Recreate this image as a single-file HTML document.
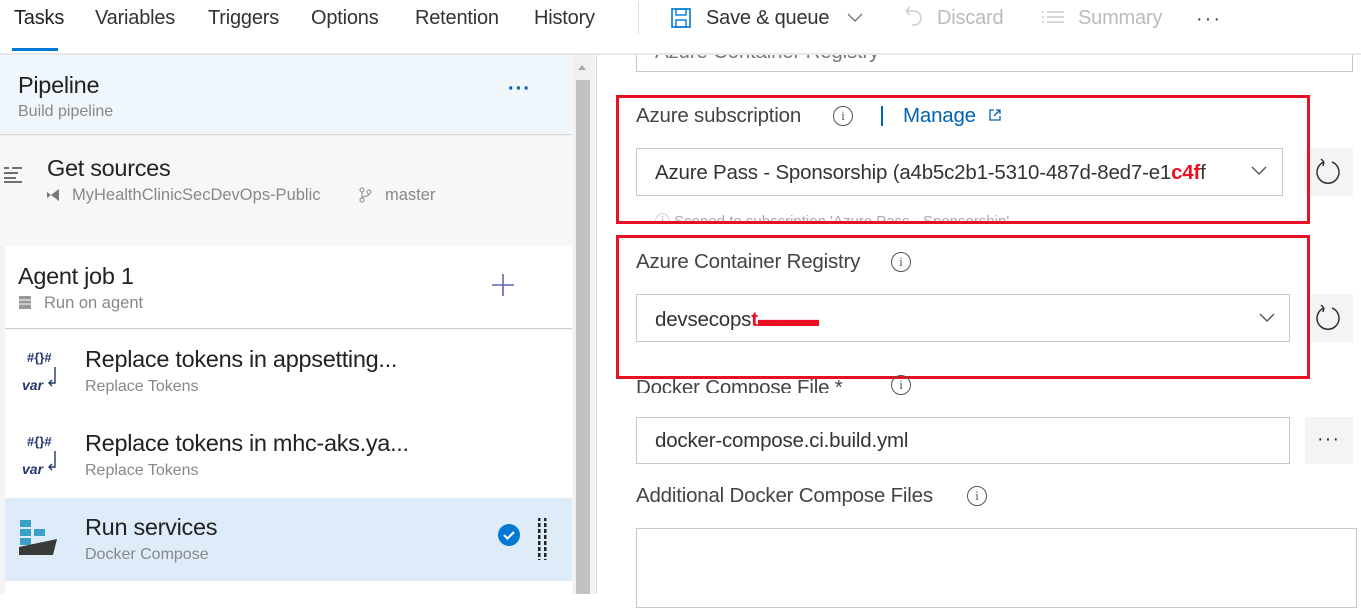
<!DOCTYPE html>
<html><head><meta charset="utf-8"><style>
*{box-sizing:border-box;margin:0;padding:0}
body{width:1361px;height:594px;overflow:hidden;background:#fff;font-family:"Liberation Sans",sans-serif;color:#222;position:relative}
.a{position:absolute;white-space:nowrap}
.tab{font-size:20px;color:#333;top:7px;letter-spacing:-0.2px}
.t20{font-size:23.5px;color:#222;letter-spacing:-0.3px}
.sub{font-size:16px;color:#888}
.lbl{font-size:20.5px;color:#444;letter-spacing:-0.2px}
.box{position:absolute;border:1px solid #c8c8c8;background:#fff}
.red{position:absolute;border:3px solid #e81123}
.info{position:absolute;width:20px;height:20px;border:1.5px solid #555;border-radius:50%;font-size:13px;text-align:center;line-height:17px;color:#555;font-family:"Liberation Serif",serif}
.btn{position:absolute;background:#f4f4f4}
</style></head><body>
<!-- right top clipped box -->
<div class="box" style="left:636px;top:40px;width:717px;height:32px"></div>
<div class="a lbl" style="left:655px;top:40px;color:#777">Azure Container Registry</div>
<!-- header -->
<div class="a" style="left:0;top:0;width:1361px;height:53px;background:#fff"></div>
<div class="a tab" style="left:14px;color:#222">Tasks</div>
<div class="a" style="left:12px;top:48px;width:46px;height:3px;background:#0078d4"></div>
<div class="a tab" style="left:95px">Variables</div>
<div class="a tab" style="left:208px">Triggers</div>
<div class="a tab" style="left:311px">Options</div>
<div class="a tab" style="left:415px">Retention</div>
<div class="a tab" style="left:534px">History</div>
<div class="a" style="left:638px;top:2px;width:1px;height:32px;background:#ddd"></div>
<svg class="a" style="left:670px;top:7px" width="22" height="22" viewBox="0 0 22 22"><rect x="2" y="2" width="18" height="18" fill="none" stroke="#0078d4" stroke-width="1.6"/><rect x="6" y="2" width="10" height="6" fill="none" stroke="#0078d4" stroke-width="1.4"/><rect x="6" y="13" width="10" height="7" fill="none" stroke="#0078d4" stroke-width="1.4"/></svg>
<div class="a tab" style="left:706px;top:7px;color:#333">Save &amp; queue</div>
<svg class="a" style="left:846px;top:12px" width="18" height="12"><path d="M2 2l7 7 7-7" fill="none" stroke="#777" stroke-width="1.4"/></svg>
<svg class="a" style="left:902px;top:5px" width="22" height="26"><path d="M4 6 h8 a7 7 0 0 1 0 14 h-2 M4 6 l4 -4 M4 6 l4 4" fill="none" stroke="#ccc" stroke-width="1.5"/></svg>
<div class="a tab" style="left:937px;top:7px;color:#bbb">Discard</div>
<svg class="a" style="left:1041px;top:10px" width="24" height="16"><path d="M1 2h2M6 2h17M1 7h2M6 7h17M1 12h2M6 12h17" stroke="#ccc" stroke-width="1.4"/></svg>
<div class="a tab" style="left:1078px;top:7px;color:#bbb">Summary</div>
<div class="a" style="left:1196px;top:8px;font-size:20px;color:#444;letter-spacing:2px">···</div>
<div class="a" style="left:0;top:53px;width:1361px;height:2px;background:#eae7ea"></div>

<!-- left panel -->
<div class="a" style="left:0;top:55px;width:596px;height:539px;background:#f4f4f4"></div>
<div class="a" style="left:0;top:55px;width:572px;height:80px;background:#eff6fc;border-bottom:1px solid #d8d8d8"></div>
<div class="a t20" style="left:18px;top:72px">Pipeline</div>
<div class="a sub" style="left:18px;top:103px">Build pipeline</div>
<div class="a" style="left:508px;top:78px;font-size:20px;color:#0058a8;font-weight:bold;letter-spacing:1px">···</div>
<div class="a" style="left:0;top:136px;width:572px;height:110px;background:#f7f7f7"></div>
<svg class="a" style="left:2px;top:164px" width="22" height="20"><path d="M2 4h5M10 4h10M2 9h14M2 14h12M2 18h18" stroke="#444" stroke-width="1.5"/></svg>
<div class="a t20" style="left:47px;top:155px">Get sources</div>
<svg class="a" style="left:46px;top:188px" width="16" height="14"><path d="M1 4l4 3-4 3zM5 7l8-6v12z" fill="#777"/></svg>
<div class="a sub" style="left:72px;top:186px;font-size:16.5px">MyHealthClinicSecDevOps-Public</div>
<svg class="a" style="left:358px;top:187px" width="14" height="16"><circle cx="4" cy="3" r="2" fill="none" stroke="#888"/><circle cx="4" cy="13" r="2" fill="none" stroke="#888"/><circle cx="11" cy="5" r="2" fill="none" stroke="#888"/><path d="M4 5v6M11 7c0 3-7 2-7 4" fill="none" stroke="#888"/></svg>
<div class="a sub" style="left:385px;top:186px;font-size:16.5px">master</div>

<div class="a" style="left:5px;top:246px;width:567px;height:83px;background:#fff;border-bottom:1px solid #d0d0d0"></div>
<div class="a t20" style="left:18px;top:263px">Agent job 1</div>
<svg class="a" style="left:18px;top:295px" width="14" height="15"><rect x="1" y="1" width="12" height="13" fill="#999"/><path d="M1 5h12M1 9h12" stroke="#fff"/></svg>
<div class="a sub" style="left:44px;top:294px;font-size:16.5px">Run on agent</div>
<svg class="a" style="left:490px;top:272px" width="26" height="26"><path d="M13 2v22M2 13h22" stroke="#5b66b5" stroke-width="1.6"/></svg>

<div class="a" style="left:5px;top:330px;width:567px;height:168px;background:#fff"></div>
<div class="a" style="left:27px;top:350px;font-size:13px;color:#24386e;font-weight:bold">#{}#</div>
<div class="a" style="left:22px;top:377px;font-size:14px;color:#24386e;font-style:italic;font-weight:bold">var</div>
<svg class="a" style="left:48px;top:366px" width="10" height="22"><path d="M7 1v16H2M4 14l-3 3 3 3" fill="none" stroke="#24386e" stroke-width="1.4"/></svg>
<div class="a t20" style="left:85px;top:346px">Replace tokens in appsetting...</div>
<div class="a sub" style="left:85px;top:378px">Replace Tokens</div>
<div class="a" style="left:27px;top:434px;font-size:13px;color:#24386e;font-weight:bold">#{}#</div>
<div class="a" style="left:22px;top:461px;font-size:14px;color:#24386e;font-style:italic;font-weight:bold">var</div>
<svg class="a" style="left:48px;top:450px" width="10" height="22"><path d="M7 1v16H2M4 14l-3 3 3 3" fill="none" stroke="#24386e" stroke-width="1.4"/></svg>
<div class="a t20" style="left:85px;top:430px">Replace tokens in mhc-aks.ya...</div>
<div class="a sub" style="left:85px;top:462px">Replace Tokens</div>

<div class="a" style="left:5px;top:498px;width:567px;height:83px;background:#deecf9"></div>
<svg class="a" style="left:17px;top:517px" width="42" height="48"><rect x="3" y="3" width="11" height="7" fill="#3aa0c8"/><rect x="3" y="12" width="11" height="7" fill="#3aa0c8"/><rect x="17" y="12" width="11" height="7" fill="#3aa0c8"/><rect x="3" y="21" width="11" height="7" fill="#3aa0c8"/><path d="M2 30 L40 22 L36 38 L2 38z" fill="#3a3a3a"/></svg>
<div class="a t20" style="left:85px;top:514px">Run services</div>
<div class="a sub" style="left:85px;top:546px">Docker Compose</div>
<svg class="a" style="left:497px;top:523px" width="24" height="24"><circle cx="12" cy="12" r="11" fill="#0078d4"/><path d="M7 12l3.5 3.5L17 9" fill="none" stroke="#fff" stroke-width="2.2"/></svg>
<svg class="a" style="left:537px;top:517px" width="12" height="44"><g fill="#222"><rect x="1" y="1" width="2.5" height="42"/><rect x="7" y="1" width="2.5" height="42"/></g><g fill="#deecf9"><rect x="0" y="4" width="12" height="2"/><rect x="0" y="10" width="12" height="2"/><rect x="0" y="16" width="12" height="2"/><rect x="0" y="22" width="12" height="2"/><rect x="0" y="28" width="12" height="2"/><rect x="0" y="34" width="12" height="2"/><rect x="0" y="40" width="12" height="2"/></g></svg>
<div class="a" style="left:5px;top:581px;width:567px;height:13px;background:#fff"></div>

<!-- scrollbar -->
<div class="a" style="left:574px;top:55px;width:17px;height:539px;background:#f0f0f0"></div>
<svg class="a" style="left:577px;top:63px" width="10" height="8"><path d="M1 7l4-5 4 5z" fill="#aaa"/></svg>
<div class="a" style="left:576px;top:80px;width:14px;height:514px;background:#c2c2c2"></div>
<div class="a" style="left:596px;top:55px;width:1px;height:539px;background:#e0e0e0"></div>

<!-- right -->
<div class="a lbl" style="left:636px;top:104px">Azure subscription</div>
<div class="info" style="left:833px;top:106px">i</div>
<div class="a" style="left:881px;top:106px;width:2px;height:20px;background:#0063b1"></div>
<div class="a lbl" style="left:903px;top:104px;color:#0063b1">Manage</div>
<svg class="a" style="left:989px;top:109px" width="12" height="12"><path d="M5 1H1v10h10V7M7 1h4v4M11 1L5 7" fill="none" stroke="#0063b1" stroke-width="1.3"/></svg>
<div class="box" style="left:636px;top:148px;width:647px;height:48px"></div>
<div class="a lbl" style="left:655px;top:161px;color:#333">Azure Pass - Sponsorship (a4b5c2b1-5310-487d-8ed7-e1<span style="color:#e81123;font-weight:bold">c4f</span>f</div>
<div class="a" style="left:1240px;top:150px;width:40px;height:44px;background:#fff"></div>
<svg class="a" style="left:1250px;top:165px" width="18" height="12"><path d="M2 2l7 7 7-7" fill="none" stroke="#555" stroke-width="1.4"/></svg>
<div class="btn" style="left:1305px;top:148px;width:48px;height:48px"></div>
<svg class="a" style="left:1315px;top:158px" width="28" height="28"><path d="M9 4 A11 11 0 1 0 17 4 M9 4 l-3 -3 M9 4 l-1 4" fill="none" stroke="#333" stroke-width="1.5"/></svg>
<div class="a" style="left:655px;top:210px;font-size:15px;color:#aaa">ⓘ Scoped to subscription 'Azure Pass - Sponsorship'</div>
<div class="a" style="left:616px;top:222px;width:700px;height:14px;background:#fff"></div>
<div class="red" style="left:616px;top:95px;width:694px;height:129px"></div>

<div class="a lbl" style="left:636px;top:250px">Azure Container Registry</div>
<div class="info" style="left:891px;top:252px">i</div>
<div class="box" style="left:636px;top:294px;width:654px;height:48px"></div>
<div class="a lbl" style="left:655px;top:308px;color:#333">devsecops<span style="color:#e81123;font-weight:bold">t▬▬▬</span></div>
<svg class="a" style="left:1258px;top:312px" width="18" height="12"><path d="M2 2l7 7 7-7" fill="none" stroke="#555" stroke-width="1.4"/></svg>
<div class="btn" style="left:1311px;top:294px;width:42px;height:48px"></div>
<svg class="a" style="left:1315px;top:304px" width="28" height="28"><path d="M9 4 A11 11 0 1 0 17 4 M9 4 l-3 -3 M9 4 l-1 4" fill="none" stroke="#333" stroke-width="1.5"/></svg>
<div class="red" style="left:616px;top:235px;width:694px;height:144px"></div>

<div class="a lbl" style="left:636px;top:376px;height:17px;overflow:hidden">Docker Compose File *</div>
<div class="info" style="left:891px;top:375px">i</div>
<div class="box" style="left:636px;top:417px;width:654px;height:47px"></div>
<div class="a lbl" style="left:655px;top:429px;color:#333">docker-compose.ci.build.yml</div>
<div class="btn" style="left:1305px;top:417px;width:48px;height:47px"></div>
<div class="a" style="left:1317px;top:428px;font-size:20px;letter-spacing:1px;color:#333">···</div>

<div class="a lbl" style="left:636px;top:484px">Additional Docker Compose Files</div>
<div class="info" style="left:967px;top:486px">i</div>
<div class="box" style="left:636px;top:528px;width:721px;height:80px"></div>
</body></html>
